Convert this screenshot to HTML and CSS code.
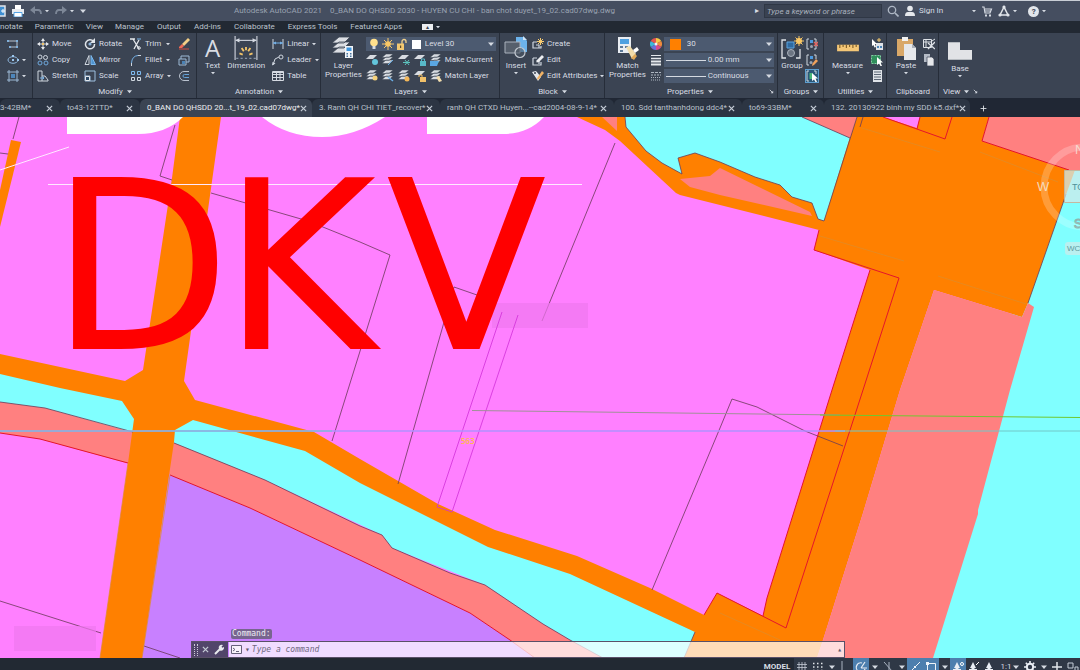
FILE: index.html
```html
<!DOCTYPE html>
<html lang="en">
<head>
<meta charset="utf-8">
<title>Autodesk AutoCAD 2021</title>
<link rel="stylesheet" href="styles.css">
</head>
<body>
<svg class="sprite" aria-hidden="true">
  <symbol id="caret" viewBox="0 0 6 6"><path d="M0 1.500h6L3 5z" fill="#d5dae2"/></symbol>
  <symbol id="polyline" viewBox="0 0 12 12"><path d="M1 3h9v6H3" fill="none" stroke="#b9c2cf"/><path d="M0 2h2v2H0zM9 2h2v2H9zM2 8h2v2H2zM9 8h2v2H9z" fill="#7fb0dc"/></symbol>
  <symbol id="ellipse" viewBox="0 0 12 12"><ellipse cx="6" cy="6" rx="5" ry="3.300" fill="none" stroke="#8fb7dd"/><path d="M5 5h2v2H5zM10 5h2v2h-2zM5 1h2v2H5z" fill="#9cc7ee"/></symbol>
  <symbol id="hatch" viewBox="0 0 12 12"><path d="M2 0v12M10 0v12M0 2h12M0 10h12" stroke="#9db9d6" fill="none"/><path d="M4 4h4v4H4z" fill="#4d86bb"/></symbol>
  <symbol id="move" viewBox="0 0 12 12"><path d="M6 1v10M1 6h10" stroke="#e5e8ec"/><path d="M6 0l2 3H4zM6 12l2-3H4zM0 6l3-2v4zM12 6L9 4v4z" fill="#e5e8ec"/><path d="M5 5h2v2H5z" fill="#f2c56b"/></symbol>
  <symbol id="copy" viewBox="0 0 12 12"><g fill="none" stroke="#cfd6df"><circle cx="3" cy="3" r="2"/><circle cx="8.500" cy="3.500" r="2"/><circle cx="3" cy="9" r="2" stroke="#6ea8dc"/><circle cx="9" cy="9" r="2" stroke="#6ea8dc"/></g></symbol>
  <symbol id="stretch" viewBox="0 0 12 12"><path d="M1 1h4v10H1zM5 6h3l3 4v1H5" fill="none" stroke="#cfd6df"/><path d="M3 8h4M7 8L5.500 6.500M7 8L5.500 9.500" stroke="#74b0e6"/></symbol>
  <symbol id="rotate" viewBox="0 0 12 12"><path d="M9.500 3.500A4.500 4.500 0 1 0 10.500 6" fill="none" stroke="#e1e5ea" stroke-width="1.500"/><path d="M11 0v5H6z" fill="#e1e5ea"/><circle cx="6" cy="6" r="1.600" fill="#8fb7dd"/></symbol>
  <symbol id="mirror" viewBox="0 0 12 12"><path d="M5 1.500v9H1z" fill="none" stroke="#cfd6df"/><path d="M7 1.500v9h4.500z" fill="#4f93cf" stroke="#7db9ee"/></symbol>
  <symbol id="scale" viewBox="0 0 12 12"><path d="M1 11V1h10v10H6V6H1M1 11h5" fill="none" stroke="#9fc0e0"/><path d="M1.500 6.500h4v4h-4z" fill="#2f4a66" stroke="#e2e6eb"/></symbol>
  <symbol id="trim" viewBox="0 0 12 12"><path d="M0 1h5M3 1l6 10M9 2L4 11" stroke="#e6e9ed" stroke-width="1.300" fill="none"/><path d="M7 1h4" stroke="#7db9ee"/><circle cx="9" cy="10" r="1.300" fill="none" stroke="#e6e9ed"/></symbol>
  <symbol id="fillet" viewBox="0 0 12 12"><path d="M1.500 12V9" stroke="#cfd6df"/><path d="M1.500 9Q2 2 8 1.500" fill="none" stroke="#74b0e6"/><path d="M8 1.500h3" stroke="#cfd6df"/></symbol>
  <symbol id="array" viewBox="0 0 12 12"><g fill="none"><path d="M1.500 1.500h3v3h-3zM7.500 1.500h3v3h-3z" stroke="#7db9ee"/><path d="M1.500 7.500h3v3h-3zM7.500 7.500h3v3h-3z" stroke="#cfd6df"/></g></symbol>
  <symbol id="erase" viewBox="0 0 12 12"><path d="M10 0l2 2-6 6-2-2z" fill="#f4cf87"/><path d="M4 6l2 2-2 2H1V9z" fill="#f06a55"/><path d="M1 11h10" stroke="#d04f42"/></symbol>
  <symbol id="explode" viewBox="0 0 12 12"><path d="M1 5h7v6H1zM3 5V2h8v6H8" fill="none" stroke="#9db9d6"/><path d="M4 7h3v3H4z" fill="#4b82b4"/></symbol>
  <symbol id="offset" viewBox="0 0 12 12"><path d="M11 1.500H6a4.500 4.500 0 0 0 0 9h5" fill="none" stroke="#b9c2cf"/><path d="M11 4.500H6.500a1.500 1.500 0 0 0 0 3H11" fill="none" stroke="#64a2d8"/></symbol>
  <symbol id="dimension" viewBox="0 0 22 22"><path d="M1 0v22M21 0v22" stroke="#d5dae2"/><path d="M2 4h18" stroke="#d5dae2"/><path d="M1 4l4-2v4zM21 4l-4-2v4z" fill="#d5dae2"/><path d="M5 16l3 1M7 11l2 3M11 10v3M15 11l-2 3M17 16l-3 1" stroke="#f3c469" stroke-width="1.700"/><path d="M2 20.500h18" stroke="#8693a5" stroke-dasharray="2 2"/></symbol>
  <symbol id="linear" viewBox="0 0 12 12"><path d="M1 1v10M11 1v10" stroke="#cfd6df"/><path d="M1 5h10" stroke="#74b0e6"/><path d="M1 5l3-1.500v3zM11 5L8 3.500v3z" fill="#74b0e6"/></symbol>
  <symbol id="leader" viewBox="0 0 12 12"><path d="M1 11l2-6 4-2" fill="none" stroke="#cfd6df"/><path d="M0 11.500l.5-3.500 3 1.500z" fill="#cfd6df"/><circle cx="9" cy="3" r="2" fill="none" stroke="#cfd6df"/></symbol>
  <symbol id="table" viewBox="0 0 12 12"><path d="M.5 1.500h11v9H.5zM.5 4.500h11M.5 7.500h11M4.500 3v8M8 3v8" fill="none" stroke="#d5dae2"/><path d="M1 1h10v2H1z" fill="#d5dae2"/></symbol>
  <symbol id="layers" viewBox="0 0 24 24"><path d="M8 1h11l-6 6H1zM8 6h11l-6 6H1zM8 11h11l-6 6H1z" fill="#dcdfe4" stroke="#3b4453" stroke-width=".8"/><path d="M14 10h8v12h-8z" fill="#f0f4f8"/><path d="M15.500 11.500h5V15h-5z" fill="#3d94dc"/><path d="M15.500 17h1.500v1.500h-1.500zM19 17h1.500v1.500H19zM15.500 19.500h1.500V21h-1.500zM19 19.500h1.500V21H19z" fill="#46729c"/></symbol>
  <symbol id="lay" viewBox="0 0 12 12"><path d="M4 0h7L7 3.500H0zM4 3h7L7 6.500H0zM4 6h7L7 9.500H0z" fill="#d7dbe1" stroke="#3b4453" stroke-width=".5"/></symbol>
  <symbol id="lay1" viewBox="0 0 12 12"><path d="M4 1h7L7 5H0z" fill="#d7dbe1"/></symbol>
  <symbol id="bulb" viewBox="0 0 12 12"><circle cx="6" cy="4.500" r="3.800" fill="#ffe08c"/><path d="M4.500 8h3v3h-3z" fill="#d8dce2"/></symbol>
  <symbol id="sun" viewBox="0 0 12 12"><circle cx="6" cy="6" r="2.800" fill="#ffc95a"/><path d="M6 0v12M0 6h12M2 2l8 8M10 2l-8 8" stroke="#f7c76b"/></symbol>
  <symbol id="lock" viewBox="0 0 12 12"><path d="M6 6V3.500a2 2 0 0 1 4 0V5" fill="none" stroke="#f0d08d" stroke-width="1.300"/><path d="M1 5.500h7V12H1z" fill="#f3c871"/><path d="M4 7.500h1.200V10H4z" fill="#5c4b2a"/></symbol>
  <symbol id="insert" viewBox="0 0 24 24"><path d="M12 1h8l3 4v11H12z" fill="#6cb3ec"/><path d="M19 0l4 4h-4z" fill="#cfe5f8"/><path d="M1 6h15v11H1z" fill="#565f6c" stroke="#aab2bd"/><circle cx="16" cy="16.500" r="5" fill="#4c5664" fill-opacity=".6" stroke="#c3c9d1" stroke-width="1.200"/></symbol>
  <symbol id="create" viewBox="0 0 12 12"><path d="M1 4h4M1 4v6h8V8M4 7h3v3" fill="none" stroke="#cfd6df" stroke-width="1.200"/><path d="M8.500 0v7M5 3.500h7M6 1l5 5M11 1L6 6" stroke="#f5ca70"/></symbol>
  <symbol id="edit" viewBox="0 0 12 12"><path d="M1 4h4M1 4v7h8V8M4 7h3v3" fill="none" stroke="#cfd6df" stroke-width="1.200"/><path d="M10 1l2 2-5 5-2.500.5L5 6z" fill="#eceef1"/></symbol>
  <symbol id="attr" viewBox="0 0 12 12"><path d="M0 2l4-1 5 6-3 4z" fill="#e5e8ec"/><path d="M10 1l2 2-5 6-2 1 .5-2.500z" fill="#f0b265"/><circle cx="3" cy="3" r="1" fill="#3b4453"/></symbol>
  <symbol id="match" viewBox="0 0 24 24"><path d="M3 1h13v16H3z" fill="#e9edf2"/><path d="M5 3h9v5H5z" fill="#4ea0e0"/><path d="M5 10h3v2H5zM10 10h3v2h-3zM5 14h3v2H5z" fill="#5d7a98"/><path d="M11 11l4-1 6 8-4 5z" fill="#f2ddaa"/><path d="M18 14l4-3 2 3-4 3z" fill="#fff"/><path d="M16 22l4-4 2 2-3 4z" fill="#e2aa58"/></symbol>
  <symbol id="wheel" viewBox="0 0 12 12"><path d="M6 6V0a6 6 0 0 1 5.200 3z" fill="#f6c744"/><path d="M6 6l5.200-3a6 6 0 0 1 0 6z" fill="#f08a3c"/><path d="M6 6l5.200 3A6 6 0 0 1 6 12z" fill="#d94b8a"/><path d="M6 6v6a6 6 0 0 1-5.200-3z" fill="#6c6fd8"/><path d="M6 6L.8 9a6 6 0 0 1 0-6z" fill="#3cb7d8"/><path d="M6 6L.8 3A6 6 0 0 1 6 0z" fill="#e4554d"/><circle cx="6" cy="6" r="1.500" fill="#f1f1f1"/></symbol>
  <symbol id="weights" viewBox="0 0 12 12"><path d="M1 1.500h10" stroke="#e5e8ec"/><path d="M1 4.500h10" stroke="#e5e8ec" stroke-width="1.500"/><path d="M1 7.500h10M1 10.500h10" stroke="#e5e8ec" stroke-width="2"/></symbol>
  <symbol id="types" viewBox="0 0 12 12"><path d="M1 2.500h10" stroke="#aeb6c1" stroke-dasharray="3 1"/><path d="M1 5h10" stroke="#aeb6c1" stroke-dasharray="2 1"/><path d="M1 7.500h10M1 10h10" stroke="#aeb6c1" stroke-dasharray="1 1"/></symbol>
  <symbol id="group" viewBox="0 0 24 24"><path d="M6 4H2v18h4M16 22h4V13" fill="none" stroke="#e0e4e9" stroke-width="1.300"/><path d="M7 6h7v6H7z" fill="#2f6aa0" stroke="#5ea4de"/><circle cx="11" cy="17" r="3.500" fill="#6c7582" stroke="#aab2bd"/><circle cx="19" cy="5" r="3" fill="#ffc95a"/><path d="M19 0v10M14 5h10M15.500 1.500l7 7M22.500 1.500l-7 7" stroke="#f7c76b"/></symbol>
  <symbol id="ungroup" viewBox="0 0 12 12"><path d="M3 1H1v10h2M8 1h2v10H8" fill="none" stroke="#cfd6df"/><path d="M4 2h3v3H4z" fill="#4d9be0"/><circle cx="5.500" cy="8.500" r="1.500" fill="#9aa4b2"/><path d="M8 4l4 4M12 4L8 8" stroke="#e8655f" stroke-width="1.300"/></symbol>
  <symbol id="gedit" viewBox="0 0 12 12"><path d="M3 1H1v10h2M8 1h2v4" fill="none" stroke="#cfd6df"/><path d="M4 2h3v3H4z" fill="#4d9be0"/><circle cx="5" cy="8.500" r="1.500" fill="#9aa4b2"/><path d="M10 5l2 2-4 4-2 1 .5-2.500z" fill="#f0a25c"/></symbol>
  <symbol id="gsel" viewBox="0 0 12 12"><path d="M3 1H1v10h2M8 1h2v3" fill="none" stroke="#cfd6df"/><path d="M3.500 3h3v6h-3z" fill="#49b779"/><path d="M6 3l6 5.500H9.500L11 12H9.500L8 9.500 6 11z" fill="#fff"/></symbol>
  <symbol id="ruler" viewBox="0 0 22 10"><path d="M1 2h20v6H1z" fill="#f4c777"/><path d="M3.500 2v3M6.500 2v2M9.500 2v3M12.500 2v2M15.500 2v3M18.500 2v2" stroke="#7a5a24"/></symbol>
  <symbol id="qsel" viewBox="0 0 12 12"><path d="M5 5h7v7H5z" fill="#dfe3e8"/><path d="M6 8h2v2H6zM9 8h2v2H9z" fill="#4c86b9"/><path d="M1 1l5 5H4l1 3-1.500.5L2.500 7 1 8z" fill="#fff"/><path d="M8 0v4M6 2h4" stroke="#f5ca70"/></symbol>
  <symbol id="selall" viewBox="0 0 12 12"><path d="M.5 1.500h9v8h-9z" fill="#2f8f5b" stroke="#7fd0a0" stroke-dasharray="2 1"/><path d="M6 3l6 5.500H9.500L11 12H9.500L8 9.500 6 11z" fill="#fff"/></symbol>
  <symbol id="calc" viewBox="0 0 12 12"><path d="M2 0h9v12H2z" fill="#dfe3e8"/><path d="M3 2h7M3 4.500h7M3 7h7M3 9.500h7" stroke="#5b6675"/></symbol>
  <symbol id="paste" viewBox="0 0 24 24"><path d="M3 3h16v17H3z" fill="#d9a868"/><path d="M8 1h6v4H8z" fill="#f2f2f2"/><path d="M10 8h8l4 4v12H10z" fill="#e6e8eb"/><path d="M18 8l4 4h-4z" fill="#a9b0ba"/></symbol>
  <symbol id="cut" viewBox="0 0 12 12"><path d="M.5 1.500h8v8h-8zM.5 4h8M3 1v8" fill="none" stroke="#dfe3e8"/><path d="M5 5l7 6M12 4l-7 7" stroke="#dfe3e8" stroke-width="1.300"/><path d="M9 3l3-2" stroke="#dfe3e8"/></symbol>
  <symbol id="copyclip" viewBox="0 0 12 12"><path d="M1 0h6v8H1z" fill="#b4bbc5"/><path d="M4 3h5l2 2v7H4z" fill="#e6e8eb" stroke="#3b4453" stroke-width=".7"/></symbol>
  <symbol id="base" viewBox="0 0 22 18"><path d="M0 1h11v7h11v9H0z" fill="#e1e3e6"/></symbol>
  <symbol id="launch" viewBox="0 0 6 6"><path d="M1 1l3 3" stroke="#d5dae2"/><path d="M5 2v3H2z" fill="#d5dae2"/></symbol>
  <symbol id="printer" viewBox="0 0 12 12"><path d="M3 0h6v4H3z" fill="#fff"/><path d="M0 4h12v5H0z" fill="#e9ecf0"/><path d="M2 7.500h8V12H2z" fill="#fff" stroke="#56a4e4"/></symbol>
  <symbol id="saveas" viewBox="0 0 12 12"><path d="M1 1h10v10H1z" fill="#3f8fd2" stroke="#e1e5ea" stroke-width="1.500"/><path d="M7 6h4M9 4v4" stroke="#fff"/></symbol>
  <symbol id="undo" viewBox="0 0 12 12"><path d="M4 5h4q3 0 3 4" fill="none" stroke="#7d8797" stroke-width="1.800"/><path d="M0 5l5-4v8z" fill="#7d8797"/></symbol>
  <symbol id="redo" viewBox="0 0 12 12"><path d="M8 5H4Q1 5 1 9" fill="none" stroke="#7d8797" stroke-width="1.800"/><path d="M12 5L7 1v8z" fill="#7d8797"/></symbol>
  <symbol id="search" viewBox="0 0 12 12"><circle cx="5" cy="5" r="3.700" fill="none" stroke="#aeb7c4" stroke-width="1.300"/><path d="M8 8l3.500 3.500" stroke="#aeb7c4" stroke-width="1.600"/></symbol>
  <symbol id="user" viewBox="0 0 12 12"><circle cx="6" cy="3.500" r="2.800" fill="#e5e8ec"/><path d="M1 11q0-4 3-4h4q3 0 3 4z" fill="#e5e8ec"/></symbol>
  <symbol id="cart" viewBox="0 0 12 12"><path d="M1 2h2l1 6h5l1.500-4H4M4 6h6" fill="none" stroke="#d5dae2" stroke-width="1.200"/><path d="M4 9.500h2v2H4zM8 9.500h2v2H8z" fill="#d5dae2"/></symbol>
  <symbol id="tri" viewBox="0 0 12 12"><path d="M6 2L2 10h8z" fill="none" stroke="#e1e5ea" stroke-width="1.500"/><circle cx="6" cy="2" r="1.600" fill="#e1e5ea"/><circle cx="2" cy="10" r="1.600" fill="#e1e5ea"/><circle cx="10" cy="10" r="1.600" fill="#e1e5ea"/></symbol>
  <symbol id="close" viewBox="0 0 8 8"><path d="M1 1l6 6M7 1L1 7" stroke="#c5ccd6" stroke-width="1.400"/></symbol>
  <symbol id="wrench" viewBox="0 0 12 12"><path d="M2 10l5-5" stroke="#e9ebee" stroke-width="2"/><path d="M6 5a3 3 0 0 1 4-4L8.500 2.800l.8 1L11 3a3 3 0 0 1-4 3.500z" fill="#e9ebee"/></symbol>
  <symbol id="prompt" viewBox="0 0 12 10"><path d="M.5.5h10v8H.5z" fill="#f8f2fb" stroke="#66607a"/><path d="M2 3l2 1.500L2 6M5 6.500h3" fill="none" stroke="#66607a"/></symbol>
  <symbol id="grid" viewBox="0 0 12 12"><path d="M3 1v10M6 1v10M9 1v10M1 3.500h10M1 6.500h10M1 9.500h10" stroke="#c5ccd6" stroke-width=".8"/></symbol>
  <symbol id="dots" viewBox="0 0 12 12"><path d="M1 2.500h10M1 6h10M1 9.500h10" stroke="#e1e5ea" stroke-width="1.300" stroke-dasharray="1.500 2.500"/></symbol>
  <symbol id="ortho" viewBox="0 0 12 12"><path d="M3 0v10h7" fill="none" stroke="#aab3c0"/></symbol>
  <symbol id="polar" viewBox="0 0 12 12"><path d="M10 8A4.500 4.500 0 1 1 7 2M6 7h6M6 7l4-6" fill="none" stroke="#e9eef4" stroke-width="1.200"/></symbol>
  <symbol id="iso" viewBox="0 0 12 12"><path d="M2 1l8 9M7 1v10" fill="none" stroke="#aab3c0"/></symbol>
  <symbol id="track" viewBox="0 0 12 12"><path d="M1 11L11 1" stroke="#eef3f8"/><path d="M5 5h2v2H5z" fill="#eef3f8"/></symbol>
  <symbol id="osnap" viewBox="0 0 12 12"><path d="M2.500 2.500h8v8h-8z" fill="none" stroke="#eef3f8"/><path d="M1 1h3v3H1z" fill="#eef3f8"/></symbol>
  <symbol id="anno" viewBox="0 0 12 12"><path d="M5 1l3 6H6.500v1H9v3H1V8h2.500V7H2z" fill="#e9eef4"/></symbol>
  <symbol id="gear" viewBox="0 0 12 12"><circle cx="6" cy="6" r="3.200" fill="none" stroke="#e9eef4" stroke-width="2"/><path d="M6 0v2.500M6 9.500V12M0 6h2.500M9.500 6H12M1.800 1.800l1.700 1.700M8.500 8.500l1.700 1.700M10.200 1.800L8.500 3.500M3.500 8.500l-1.700 1.700" stroke="#e9eef4" stroke-width="1.600"/></symbol>
  <symbol id="plus" viewBox="0 0 12 12"><path d="M6 1v10M1 6h10" stroke="#e1e5ea" stroke-width="1.500"/></symbol>
  <symbol id="units" viewBox="0 0 12 12"><path d="M1 2h5v5H1zM8 6h3v4H8z" fill="none" stroke="#c5ccd6"/></symbol>
</svg>

<div class="app">
  <header class="titlebar">
    <div class="quick">
      <button class="tool cropped" aria-label="Save as"><svg class="ic"><use href="#saveas"/></svg></button>
      <button class="tool" aria-label="Plot"><svg class="ic"><use href="#printer"/></svg></button>
      <button class="tool" aria-label="Undo"><svg class="ic"><use href="#undo"/></svg><svg class="car"><use href="#caret"/></svg></button>
      <button class="tool" aria-label="Redo"><svg class="ic"><use href="#redo"/></svg><svg class="car"><use href="#caret"/></svg></button>
      <button class="tool" aria-label="Customize"><svg class="car big-car"><use href="#caret"/></svg></button>
    </div>
    <div class="doc-title"><span>Autodesk AutoCAD 2021</span><span>0_BAN DO QHSDD 2030 - HUYEN CU CHI - ban chot duyet_19_02.cad07dwg.dwg</span></div>
    <div class="account">
      <span class="play">▸</span>
      <input class="search" type="text" aria-label="Search" placeholder="Type a keyword or phrase">
      <button class="tool" aria-label="Find"><svg class="ic"><use href="#search"/></svg></button>
      <button class="tool sign"><svg class="ic"><use href="#user"/></svg>Sign In</button>
      <button class="tool" aria-label="Account menu"><svg class="car"><use href="#caret"/></svg></button>
      <button class="tool" aria-label="Store"><svg class="ic"><use href="#cart"/></svg></button>
      <button class="tool" aria-label="Apps"><svg class="ic"><use href="#tri"/></svg><svg class="car"><use href="#caret"/></svg></button>
      <button class="tool help" aria-label="Help"><span class="q">?</span><svg class="car"><use href="#caret"/></svg></button>
    </div>
  </header>

  <nav class="menu">
    <a class="faded" href="#">notate</a><a class="faded" href="#">Parametric</a><a class="faded" href="#">View</a>
    <a href="#">Manage</a><a href="#">Output</a><a href="#">Add-ins</a><a href="#">Collaborate</a><a href="#">Express Tools</a><a href="#">Featured Apps</a>
    <button class="tool min" aria-label="Minimize ribbon"><span class="pill">▴</span><svg class="car"><use href="#caret"/></svg></button>
  </nav>

  <div class="ribbon">
    <section class="panel draw">
      <div class="stack">
        <button class="tool" aria-label="Polyline"><svg class="ic"><use href="#polyline"/></svg></button>
        <button class="tool" aria-label="Ellipse"><svg class="ic"><use href="#ellipse"/></svg><svg class="car"><use href="#caret"/></svg></button>
        <button class="tool" aria-label="Hatch"><svg class="ic"><use href="#hatch"/></svg><svg class="car"><use href="#caret"/></svg></button>
      </div>
    </section>

    <section class="panel modify">
      <div class="body">
        <div class="stack c1">
          <button class="tool"><svg class="ic"><use href="#move"/></svg>Move</button>
          <button class="tool"><svg class="ic"><use href="#copy"/></svg>Copy</button>
          <button class="tool"><svg class="ic"><use href="#stretch"/></svg>Stretch</button>
        </div>
        <div class="stack c2">
          <button class="tool"><svg class="ic"><use href="#rotate"/></svg>Rotate</button>
          <button class="tool"><svg class="ic"><use href="#mirror"/></svg>Mirror</button>
          <button class="tool"><svg class="ic"><use href="#scale"/></svg>Scale</button>
        </div>
        <div class="stack c3">
          <button class="tool spread"><svg class="ic"><use href="#trim"/></svg>Trim<svg class="car"><use href="#caret"/></svg></button>
          <button class="tool spread"><svg class="ic"><use href="#fillet"/></svg>Fillet<svg class="car"><use href="#caret"/></svg></button>
          <button class="tool spread"><svg class="ic"><use href="#array"/></svg>Array<svg class="car"><use href="#caret"/></svg></button>
        </div>
        <div class="stack">
          <button class="tool" aria-label="Erase"><svg class="ic"><use href="#erase"/></svg></button>
          <button class="tool" aria-label="Explode"><svg class="ic"><use href="#explode"/></svg></button>
          <button class="tool" aria-label="Offset"><svg class="ic"><use href="#offset"/></svg></button>
        </div>
      </div>
      <h2>Modify <svg class="car"><use href="#caret"/></svg></h2>
    </section>

    <section class="panel annotation">
      <div class="body">
        <button class="large"><span class="letter">A</span>Text<svg class="car"><use href="#caret"/></svg></button>
        <button class="large"><svg class="lg"><use href="#dimension"/></svg>Dimension</button>
        <div class="stack">
          <button class="tool"><svg class="ic"><use href="#linear"/></svg>Linear<svg class="car"><use href="#caret"/></svg></button>
          <button class="tool"><svg class="ic"><use href="#leader"/></svg>Leader<svg class="car"><use href="#caret"/></svg></button>
          <button class="tool"><svg class="ic"><use href="#table"/></svg>Table</button>
        </div>
      </div>
      <h2>Annotation <svg class="car"><use href="#caret"/></svg></h2>
    </section>

    <section class="panel layer">
      <div class="body">
        <button class="large"><svg class="lg"><use href="#layers"/></svg>Layer<br>Properties</button>
        <div class="stack grow">
          <div class="combo layer-combo">
            <svg class="ic"><use href="#bulb"/></svg><svg class="ic"><use href="#sun"/></svg><svg class="ic"><use href="#lock"/></svg><span class="swatch white"></span>
            <select aria-label="Layer"><option>Level 30</option></select><svg class="car big-car"><use href="#caret"/></svg>
          </div>
          <div class="icons">
            <button class="tool" aria-label="Layer off"><svg class="ic"><use href="#lay1"/><circle cx="9" cy="8" r="3" fill="#63c6dc"/></svg></button>
            <button class="tool" aria-label="Isolate"><svg class="ic"><use href="#lay"/><path d="M6 11l5-5" stroke="#6bb0e8"/></svg></button>
            <button class="tool" aria-label="Freeze"><svg class="ic"><use href="#lay1"/><path d="M5 8.500h7M7 6l4 5M11 6l-4 5" stroke="#5cc4bf"/></svg></button>
            <button class="tool" aria-label="Lock layer"><svg class="ic"><use href="#lay1"/><path d="M6 7h6v5H6z" fill="#58b9c9"/><path d="M7.500 7V5h3v2" fill="none" stroke="#58b9c9"/></svg></button>
            <button class="tool"><svg class="ic"><use href="#lay"/><path d="M0 7h9l-2 5H0z" fill="#5aa6e2"/></svg>Make Current</button>
          </div>
          <div class="icons">
            <button class="tool" aria-label="All layers on"><svg class="ic"><use href="#lay"/><circle cx="9" cy="8" r="2.500" fill="#f5d27c"/></svg></button>
            <button class="tool" aria-label="Unisolate"><svg class="ic"><use href="#lay"/><path d="M6 7l5 4" stroke="#6bb0e8" stroke-width="1.500"/></svg></button>
            <button class="tool" aria-label="Thaw"><svg class="ic"><use href="#lay"/><circle cx="9" cy="9" r="2.500" fill="#f2b75a"/></svg></button>
            <button class="tool" aria-label="Unlock layer"><svg class="ic"><use href="#lay1"/><path d="M6 7h6v5H6z" fill="#f0c069"/><path d="M5 7V5h3v2" fill="none" stroke="#f0c069"/></svg></button>
            <button class="tool"><svg class="ic"><use href="#lay"/><path d="M6 7l3-1 3 5-3 1z" fill="#f3deae"/></svg>Match Layer</button>
          </div>
        </div>
      </div>
      <h2>Layers <svg class="car"><use href="#caret"/></svg></h2>
    </section>

    <section class="panel block">
      <div class="body">
        <button class="large"><svg class="lg"><use href="#insert"/></svg>Insert<svg class="car"><use href="#caret"/></svg></button>
        <div class="stack">
          <button class="tool"><svg class="ic"><use href="#create"/></svg>Create</button>
          <button class="tool"><svg class="ic"><use href="#edit"/></svg>Edit</button>
          <button class="tool"><svg class="ic"><use href="#attr"/></svg>Edit Attributes<svg class="car"><use href="#caret"/></svg></button>
        </div>
      </div>
      <h2>Block <svg class="car"><use href="#caret"/></svg></h2>
    </section>

    <section class="panel props">
      <div class="body">
        <button class="large"><svg class="lg"><use href="#match"/></svg>Match<br>Properties</button>
        <div class="stack grow">
          <div class="prop"><svg class="ic"><use href="#wheel"/></svg><div class="combo"><span class="swatch orange"></span><select aria-label="Color"><option>30</option></select><svg class="car big-car"><use href="#caret"/></svg></div></div>
          <div class="prop"><svg class="ic"><use href="#weights"/></svg><div class="combo"><span class="rule"></span><select aria-label="Lineweight"><option>0.00 mm</option></select><svg class="car big-car"><use href="#caret"/></svg></div></div>
          <div class="prop"><svg class="ic"><use href="#types"/></svg><div class="combo"><span class="rule"></span><select aria-label="Linetype"><option>Continuous</option></select><svg class="car big-car"><use href="#caret"/></svg></div></div>
        </div>
      </div>
      <h2>Properties <svg class="car"><use href="#caret"/></svg><svg class="car corner"><use href="#launch"/></svg></h2>
    </section>

    <section class="panel groups">
      <div class="body">
        <button class="large"><svg class="lg"><use href="#group"/></svg>Group</button>
        <div class="stack">
          <button class="tool" aria-label="Ungroup"><svg class="ic"><use href="#ungroup"/></svg></button>
          <button class="tool" aria-label="Group edit"><svg class="ic"><use href="#gedit"/></svg></button>
          <button class="tool on" aria-label="Group selection"><svg class="ic"><use href="#gsel"/></svg></button>
        </div>
      </div>
      <h2>Groups <svg class="car"><use href="#caret"/></svg></h2>
    </section>

    <section class="panel utils">
      <div class="body">
        <button class="large"><svg class="lg"><use href="#ruler"/></svg>Measure<svg class="car"><use href="#caret"/></svg></button>
        <div class="stack">
          <button class="tool" aria-label="Quick select"><svg class="ic"><use href="#qsel"/></svg></button>
          <button class="tool" aria-label="Select all"><svg class="ic"><use href="#selall"/></svg></button>
          <button class="tool" aria-label="Calculator"><svg class="ic"><use href="#calc"/></svg></button>
        </div>
      </div>
      <h2>Utilities <svg class="car"><use href="#caret"/></svg></h2>
    </section>

    <section class="panel clip">
      <div class="body">
        <button class="large"><svg class="lg"><use href="#paste"/></svg>Paste<svg class="car"><use href="#caret"/></svg></button>
        <div class="stack">
          <button class="tool" aria-label="Cut"><svg class="ic"><use href="#cut"/></svg></button>
          <button class="tool" aria-label="Copy clip"><svg class="ic"><use href="#copyclip"/></svg></button>
        </div>
      </div>
      <h2>Clipboard</h2>
    </section>

    <section class="panel view">
      <div class="body">
        <button class="large base"><svg class="lg"><use href="#base"/></svg>Base<svg class="car"><use href="#caret"/></svg></button>
      </div>
      <h2>View <svg class="car"><use href="#caret"/></svg> <svg class="car"><use href="#launch"/></svg></h2>
    </section>
  </div>

  <div class="tabs">
    <div class="tab t1"><a href="#">3-42BM*</a><button class="tool" aria-label="Close"><svg class="x"><use href="#close"/></svg></button></div>
    <div class="tab t2"><a href="#">to43-12TTD*</a><button class="tool" aria-label="Close"><svg class="x"><use href="#close"/></svg></button></div>
    <div class="tab t3 active"><a href="#">0_BAN DO QHSDD 20...t_19_02.cad07dwg*</a><button class="tool" aria-label="Close"><svg class="x"><use href="#close"/></svg></button></div>
    <div class="tab t4"><a href="#">3. Ranh QH CHI TIET_recover*</a><button class="tool" aria-label="Close"><svg class="x"><use href="#close"/></svg></button></div>
    <div class="tab t5"><a href="#">ranh QH CTXD Huyen...--cad2004-08-9-14*</a><button class="tool" aria-label="Close"><svg class="x"><use href="#close"/></svg></button></div>
    <div class="tab t6"><a href="#">100. Sdd tanthanhdong ddc4*</a><button class="tool" aria-label="Close"><svg class="x"><use href="#close"/></svg></button></div>
    <div class="tab t7"><a href="#">to69-33BM*</a><button class="tool" aria-label="Close"><svg class="x"><use href="#close"/></svg></button></div>
    <div class="tab t8"><a href="#">132. 20130922 binh my SDD k5.dxf*</a><button class="tool" aria-label="Close"><svg class="x"><use href="#close"/></svg></button></div>
    <button class="tool new" aria-label="New drawing"><svg class="x"><use href="#plus"/></svg></button>
  </div>

  <main class="canvas">
    <svg class="map" viewBox="0 117 1080 541" preserveAspectRatio="xMinYMin slice" role="img" aria-label="Land use drawing">
      <path fill="#ff80ff" d="M0 117h1080v541H0z"/>
      <!-- water and green belts -->
      <path fill="#80ffff" d="M0 370L136 400L134 440L0 402zM172 415L305 445L488 540L700 625V658H600L543 624L485 585L392 548L382 535L265 480L172 443z"/>
      <path fill="#80ffff" d="M620 117H860L824 224L680 180L620 130zM1050 150h30v508H930z"/>
      <!-- embankment and purple parcel -->
      <path fill="#ff8080" d="M0 402L45 408L135 433L130 464L40 439L0 433zM172 442L265 480L360 526L382 535L392 548L450 573L485 585L543 624L570 640L603 658H535L510 640L470 613L360 560L250 508L165 474z"/>
      <path fill="#c880ff" d="M168 474L250 508L360 560L470 613L510 640L535 658H140z"/>
      <!-- roads -->
      <g fill="#ff8000">
        <path d="M180 117H221L184 381L195 400L314 432L360 459L438 504L495 530L577 556L650 588L704 615L717 593L763 616L767 598L832 390L870 270L814 250L819 230L720 205L680 195L676 193L620 141L605 130L577 117H625L626 127L646 151L662 163L682 174L678 158L695 153L720 162L755 177L780 185L792 197L812 203L818 219L824 221L850 137L857 117H989L982 141L1075 170L1063 203L1028 303L1022 317L934 290L900 390L863 513L823 640L817 658H684L695 632L570 574L488 547L400 503L360 483L305 451L193 420L175 430L174 442L142 658H100L128 463L134 419L122 401L60 388L0 374V354L125 381L143 370L172 178z"/>
        <path d="M11 140L21 142L0 227V190z"/>
      </g>
      <path fill="#ff8080" d="M602 117H617V131zM680 179L710 176L720 168L810 212L812 216L720 195L690 187zM802 117H857L850 138zM989 117H1080V170H1069L982 141zM934 290L1022 317L1028 303L1034 307L1010 390L978 510V514L933 658H817L823 640L863 513L900 390z"/>
      <path fill="#ff80ff" d="M883 117H920L917 128z"/>
      <!-- boundary lines -->
      <g fill="none" stroke="#6a3a58" stroke-width=".8">
        <path d="M19 117L13 139M0 153L8 154M175 125L160 176L172 180M211 193L308 221L360 242L390 255L332 441M454 287L477 295M454 287L398 484M615 143L542 321M652 590L720 428L732 399L757 407L805 431L843 446M0 601L101 633M144 646L180 658M625 117L626 127L646 151L662 163L682 174L678 158L695 153L720 162L755 177L780 185L792 197L812 203L818 219L824 221M802 117L850 138M863 117L860 127"/>
        <path d="M0 402L45 408L133 432M174 443L265 480L360 526L382 535L392 548L450 573L485 585L543 624L570 640L603 658M695 632L684 658M824 221L857 117M1066 194L1063 203L1028 303"/>
      </g>
      <g fill="none" stroke="#e4152b">
        <path d="M0 433L40 439L128 463M170 475L250 508L360 560L470 613L510 640L535 658"/>
        <path d="M819 230L814 250L899 278L863 390L786 628L717 593L704 615M870 270L832 390L767 598L763 616M883 117L945 139L952 117M920 117L917 129M989 117L982 141L1069 170"/>
      </g>
      <path fill="none" stroke="#dc8c2c" stroke-width=".7" d="M862 128L940 152M980 152L1058 182M820 236L904 261M938 276L1026 304M720 613L780 640M170 475L142 658M128 463L100 658"/>
      <!-- clipped plot labels along the upper edge -->
      <path fill="#fff" d="M67 117H183Q166 134 138 134H67zM262 117H385Q354 137 322 137Q287 137 262 117zM427 117H544Q528 134 503 134H427z"/>
      <path fill="#f078f0" fill-opacity=".7" d="M492 303h96v25h-96zM14 626h82v25H14z"/>
      <path fill="none" stroke="#ffe9ff" d="M48 184.500H582M0 170L69 147"/>
      <text class="plot" x="50 222 386" y="349">DKV</text>
      <path fill="none" stroke="#d030d8" stroke-width=".8" d="M502 312L437 507L452 512L518 315"/>
      <path stroke="#a09098" d="M472 410.500L840 415"/>
      <path stroke="#70c830" d="M820 415L1080 417.500"/>
      <path stroke="#b090ff" stroke-width="1.500" d="M0 431H845"/>
      <path stroke="#70c8c8" d="M0 431H332M835 431H1080"/>
      <text class="lot" x="461" y="444">563</text>
      <!-- view cube -->
      <circle cx="1084" cy="187" r="40" fill="none" stroke="#fff" stroke-opacity=".22" stroke-width="7"/>
      <path fill="#cfe9ea" fill-opacity=".75" stroke="#c4b8a0" d="M1064.500 170.500h20v32h-20z"/>
      <g class="cube"><text x="1037" y="191">W</text><text x="1075" y="154">N</text><text class="south" x="1074" y="228">S</text></g>
      <rect x="1065" y="242" width="24" height="13" rx="3" fill="#b9f0f0"/>
      <text class="face" x="1072" y="190">TOP</text><text class="wcs" x="1067" y="251">WCS</text>
    </svg>

    <form class="command">
      <output class="history">Command:</output>
      <div class="bar">
        <span class="grip"></span>
        <button class="tool" type="button" aria-label="Close command line"><svg class="x"><use href="#close"/></svg></button>
        <button class="tool" type="button" aria-label="Customize command line"><svg class="ic"><use href="#wrench"/></svg></button>
        <div class="entry"><svg class="ic"><use href="#prompt"/></svg><span class="down">▾</span><input type="text" aria-label="Command" placeholder="Type a command"><span class="up">▴</span></div>
      </div>
    </form>
  </main>

  <footer class="status">
    <button class="s model">MODEL</button>
    <button class="s" aria-label="Grid"><svg class="ic"><use href="#grid"/></svg></button>
    <button class="s" aria-label="Snap"><svg class="ic"><use href="#dots"/></svg></button>
    <button class="s thin" aria-label="Snap menu"><svg class="car big-car"><use href="#caret"/></svg></button>
    <button class="s" aria-label="Ortho"><svg class="ic"><use href="#ortho"/></svg></button>
    <button class="s lit" aria-label="Polar"><svg class="ic"><use href="#polar"/></svg></button>
    <button class="s thin" aria-label="Polar menu"><svg class="car big-car"><use href="#caret"/></svg></button>
    <button class="s" aria-label="Isometric"><svg class="ic"><use href="#iso"/></svg></button>
    <button class="s thin" aria-label="Isometric menu"><svg class="car big-car"><use href="#caret"/></svg></button>
    <button class="s lit" aria-label="Tracking"><svg class="ic"><use href="#track"/></svg></button>
    <button class="s lit" aria-label="Object snap"><svg class="ic"><use href="#osnap"/></svg></button>
    <button class="s thin" aria-label="Object snap menu"><svg class="car big-car"><use href="#caret"/></svg></button>
    <button class="s lit" aria-label="Annotation visibility"><svg class="ic"><use href="#anno"/><circle cx="10" cy="3" r="1.500" fill="none" stroke="#fff"/></svg></button>
    <button class="s" aria-label="Auto scale"><svg class="ic"><use href="#anno"/><path d="M8 4l3-3" stroke="#fff"/></svg></button>
    <button class="s" aria-label="Annotation scale"><svg class="ic"><use href="#anno"/></svg></button>
    <button class="s scale">1:1<svg class="car big-car"><use href="#caret"/></svg></button>
    <button class="s" aria-label="Workspace"><svg class="ic"><use href="#gear"/></svg></button>
    <button class="s thin" aria-label="Workspace menu"><svg class="car big-car"><use href="#caret"/></svg></button>
    <button class="s" aria-label="Monitor"><svg class="ic"><use href="#plus"/></svg></button>
    <button class="s last" aria-label="Units"><svg class="ic"><use href="#units"/></svg></button>
  </footer>
</div>
</body>
</html>
```

FILE: styles.css
```css
* { box-sizing: border-box; }

body {
  margin: 0;
  background: #222933;
  color: #d9dde3;
  font: 8px/12px Roboto, "Noto Sans", sans-serif;
}

.sprite { display: none; }

button, input, select {
  margin: 0;
  padding: 0;
  border: 0;
  background: none;
  color: inherit;
  font: inherit;
}

a { color: inherit; text-decoration: none; }

.app {
  display: flex;
  flex-direction: column;
  height: 100vh;
  overflow: hidden;
}

.ic { width: 12px; height: 12px; flex: none; }
.car { width: 4px; height: 4px; flex: none; }
.big-car { width: 6px; height: 6px; }
.x { width: 7px; height: 7px; flex: none; }
.lg { width: 24px; height: 24px; flex: none; }

.tool {
  display: flex;
  align-items: center;
  gap: 3px;
  white-space: nowrap;
}

/* title bar */
.titlebar {
  display: flex;
  align-items: center;
  justify-content: space-between;
  flex: none;
  height: 21px;
  border-top: 1px solid #c9ced6;
  background: #454e60;
}
.quick { display: flex; align-items: center; gap: 6px; width: 234px; }
.quick .cropped { width: 6px; overflow: hidden; justify-content: flex-end; }
.doc-title { display: flex; gap: 8px; color: #99a2b1; white-space: nowrap; }
.account { display: flex; align-items: center; gap: 5px; width: 325px; margin-left: auto; }
.search {
  width: 118px;
  height: 14px;
  padding: 0 2px;
  border: 1px solid #2f3745;
  background: #3a4251;
  font-style: italic;
}
.search::placeholder { color: #a9b1bd; opacity: 1; }
.sign { margin-right: 24px; }
.help { margin-left: 6px; }
.q {
  width: 11px;
  border-radius: 50%;
  background: #e1e5ea;
  color: #3a4251;
  font-weight: 700;
  line-height: 11px;
  text-align: center;
}

/* menu row */
.menu {
  display: flex;
  align-items: center;
  gap: 13px;
  flex: none;
  height: 12px;
  background: #222933;
  color: #bcc3cd;
  white-space: nowrap;
}
.menu .faded { margin-right: -1px; }
.pill {
  width: 11px;
  height: 6px;
  background: #eceef1;
  color: #3a4251;
  font-size: 6px;
  line-height: 6px;
}
.min { margin-left: 7px; }

/* ribbon */
.ribbon { display: flex; flex: none; height: 65px; background: #3b4453; }
.panel {
  display: flex;
  flex-direction: column;
  justify-content: space-between;
  flex: none;
  padding: 3px 3px 0 4px;
  border-right: 1px solid #262d39;
}
.panel h2 {
  display: flex;
  align-items: center;
  justify-content: center;
  gap: 4px;
  margin: 0;
  height: 13px;
  font-size: 8px;
  font-weight: 400;
}
.panel h2 .car { width: 5px; height: 5px; }
.panel h2 .corner { margin-left: auto; }
.body { display: flex; gap: 4px; }
.stack { display: grid; grid-template-rows: repeat(3, 16px); align-items: center; align-content: start; }
.grow { flex: 1; }
.large {
  display: flex;
  flex-direction: column;
  align-items: center;
  justify-content: flex-start;
  line-height: 9px;
  gap: 1px;
  white-space: nowrap;
}
.letter { height: 24px; font: 24px/24px "Open Sans", sans-serif; }
.draw { width: 33px; padding-left: 7px; }
.modify { width: 164px; }
.modify .body { gap: 0; }
.c1 { width: 47px; }
.c2 { width: 46px; }
.c3 { width: 48px; }
.spread { width: 40px; }
.spread .car { margin-left: auto; }
.annotation { width: 124px; }
.annotation .body { gap: 7px; padding-left: 4px; }
.layer { width: 179px; }
.block { width: 105px; }
.props { width: 173px; }
.props h2 { padding-left: 58px; }
.groups { width: 46px; padding: 3px 1px 0 2px; }
.groups .body { gap: 2px; }
.utils { width: 63px; }
.utils .body { justify-content: space-between; padding-left: 4px; }
.clip { width: 52px; }
.clip .body { justify-content: space-between; padding-left: 3px; }
.view { flex: 1; border: 0; align-items: flex-start; }
.view .body { padding: 3px 0 0 5px; }
.on { outline: 1px solid #5e9fd0; background: #2c5878; }

.combo {
  display: flex;
  align-items: center;
  gap: 2px;
  flex: 1;
  height: 14px;
  padding: 0 2px;
  background: #4c5a70;
}
.combo select { flex: 1; min-width: 0; appearance: none; outline: 0; }
.swatch { width: 9px; height: 9px; flex: none; margin: 0 2px; }
.white { background: #fff; }
.orange { background: #ff8000; margin: 0 4px; width: 11px; height: 11px; }
.rule { width: 40px; height: 1px; background: #d5dae2; }
.prop { display: flex; align-items: center; gap: 2px; }
.icons { display: flex; gap: 4px; }

/* drawing tabs */
.tabs { display: flex; flex: none; height: 19px; padding-top: 1px; background: #202734; }
.tab {
  display: flex;
  align-items: center;
  justify-content: space-between;
  flex: none;
  padding: 0 7px;
  border-radius: 6px 6px 0 0;
  background: #2c3543;
  color: #b9c0cb;
  white-space: nowrap;
}
.active { background: #3b4453; color: #eceef1; }
.t1 { width: 60px; padding-left: 0; }
.t2 { width: 80px; }
.t3 { width: 172px; }
.t4 { width: 128px; }
.t5 { width: 174px; }
.t6 { width: 128px; }
.t7 { width: 82px; }
.t8 { width: 146px; }
.new { padding: 0 10px; }

/* drawing area */
.canvas { position: relative; flex: 1; min-height: 0; }
.map { display: block; width: 100%; height: 100%; }
.plot { fill: #f00; font: 235px "DejaVu Sans", sans-serif; }
.lot { fill: #ffb84d; font: 600 8px "Open Sans", sans-serif; }
.cube { fill: #f3e6d8; fill-opacity: .85; font: 13px "Liberation Sans", sans-serif; }
.south { fill: #b9d8d0; stroke: #8fb5b0; stroke-width: 1px; }
.face { fill: #4f8f98; font: 9px "Liberation Sans", sans-serif; }
.wcs { fill: #5f9a9e; font: 8px "Liberation Sans", sans-serif; }

.command {
  position: absolute;
  left: 191px;
  right: 235px;
  bottom: 0;
  font-family: "DejaVu Sans Mono", monospace;
}
.history {
  display: block;
  width: max-content;
  margin: 0 0 2px 40px;
  padding: 0 1px;
  border-radius: 2px;
  background: #77658f;
  line-height: 10px;
  color: #f0edf4;
}
.bar {
  display: flex;
  align-items: center;
  gap: 4px;
  height: 17px;
  border: 1px solid #5a5068;
  background: linear-gradient(90deg, #51456a 36px, transparent 36px);
}
.grip { width: 4px; height: 12px; margin-left: 2px; border: 1px dotted #d0cbd8; border-width: 0 1px; }
.entry {
  display: flex;
  align-items: center;
  gap: 2px;
  flex: 1;
  height: 15px;
  padding: 0 2px;
  background: rgb(255 255 255 / 72%);
  color: #5f586c;
}
.entry input { flex: 1; font-style: italic; outline: 0; }
.entry input::placeholder { color: #6f6880; opacity: 1; }

/* status bar */
.status {
  display: flex;
  align-items: flex-start;
  justify-content: flex-end;
  flex: none;
  height: 12px;
  overflow: hidden;
  background: #222933;
}
.s {
  display: flex;
  align-items: center;
  justify-content: center;
  flex: none;
  width: 16px;
  height: 18px;
  background: #2f3846;
}
.model { width: 34px; background: #222933; font-weight: 700; }
.thin { width: 11px; }
.lit { background: #4d7fae; }
.scale { width: 24px; gap: 2px; }
.last { width: 15px; }
```
